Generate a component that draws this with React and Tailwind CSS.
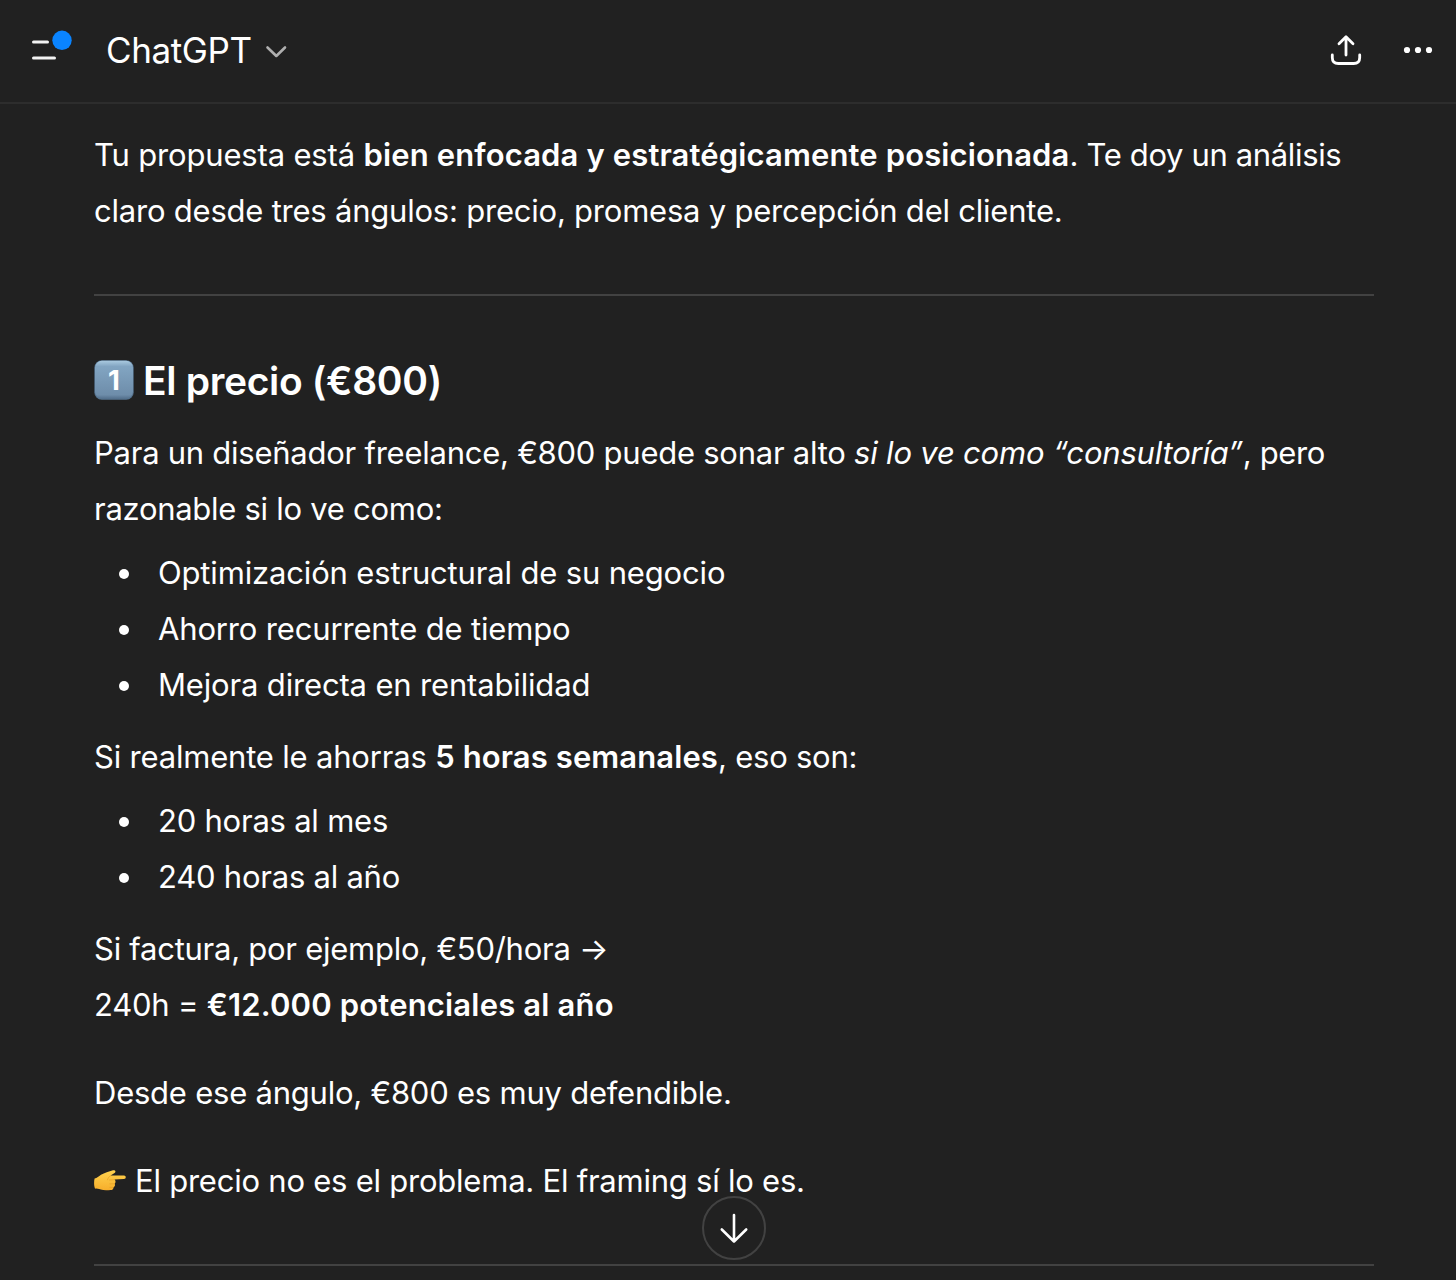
import React from "react";

function Bullet({ children }) {
  return (
    <li className="flex h-14 items-center">
      <span className="ml-[25px] mt-px h-2.5 w-2.5 shrink-0 rounded-full bg-white" />
      <span className="ml-[29px]">{children}</span>
    </li>
  );
}

function Header() {
  return (
    <header className="flex h-[104px] shrink-0 items-center border-b-2 border-[#2d2d2d]">
      <svg className="ml-7 h-12 w-12" viewBox="28 27 48 48" fill="none">
        <path d="M33.5 42H47.5M33.5 58H54.5" stroke="#f3f3f3" strokeWidth="3" strokeLinecap="round" />
        <circle cx="62" cy="40.3" r="9.7" fill="#0a84ff" />
      </svg>
      <h1 className="mb-0.5 ml-[30px] w-[159px] text-[35px] leading-[48px] tracking-[-0.4px]">ChatGPT</h1>
      <svg className="h-6 w-6" viewBox="265 39 24 24" fill="none">
        <path d="M267.5 47.5L276.3 56L285 47.5" stroke="#afafaf" strokeWidth="2.6" strokeLinecap="round" strokeLinejoin="round" />
      </svg>
      <svg className="ml-auto h-10 w-10" viewBox="1326 31 40 40" fill="none" stroke="#fff" strokeWidth="2.8" strokeLinecap="round" strokeLinejoin="round">
        <path d="M1346 55V37M1339 43.7L1346 36.8L1353 43.7M1332.3 55V57.5Q1332.3 63.5 1338.3 63.5H1353.7Q1359.7 63.5 1359.7 57.5V55" />
      </svg>
      <svg className="ml-8 mr-[18px] h-10 w-10" viewBox="1398 31 40 40" fill="#fff">
        <circle cx="1407" cy="50" r="3.1" />
        <circle cx="1418" cy="50" r="3.1" />
        <circle cx="1429" cy="50" r="3.1" />
      </svg>
    </header>
  );
}

function KeycapOne() {
  return (
    <svg className="mb-0.5 mr-[9px] h-10 w-10" viewBox="0 0 40 40">
      <defs>
        <linearGradient id="cap" x1="0" y1="0" x2="0" y2="1">
          <stop offset="0" stopColor="#a9c9df" />
          <stop offset="0.15" stopColor="#82a5c2" />
          <stop offset="0.9" stopColor="#6e8daa" />
          <stop offset="1" stopColor="#55718d" />
        </linearGradient>
      </defs>
      <rect x="0.3" y="0.3" width="39.4" height="39.4" rx="7.5" fill="#55738f" />
      <rect x="1" y="0.8" width="38" height="37.8" rx="7" fill="url(#cap)" />
      <text x="19.8" y="30" textAnchor="middle" fontFamily="Inter, sans-serif" fontWeight="700" fontSize="27.5" fill="#fff">1</text>
    </svg>
  );
}

function PointingHand() {
  return (
    <svg className="mr-[9px] h-8 w-8" viewBox="0 0 32 32">
      <defs>
        <linearGradient id="skin" x1="0" y1="0" x2="0" y2="1">
          <stop offset="0" stopColor="#ffd34f" />
          <stop offset="1" stopColor="#f7ae2b" />
        </linearGradient>
      </defs>
      <path d="M0.6 13.5C3 12.8 4.7 11.3 7 9.7C10.5 7.8 14.8 6.3 19 5.2C21.8 4.7 22.2 7.2 20.2 8.2L16.6 10.5H30C32.3 10.5 32.3 14 30 14L20.5 14.6C22 16 21.7 17.9 20.7 18.7C21.4 20.3 20.8 21.7 19.4 22.3C19.6 24 18.4 25 16.7 25C13 25.3 9.3 25.4 6.8 24.6C4.5 23.5 3 23.7 1 23.4C-0.2 20.8-0.1 16 0.6 13.5Z" fill="url(#skin)" />
      <path d="M20.5 14.7L15.5 15M20.6 18.8L15.8 18.9M19.2 22.4L15.8 22.4" fill="none" stroke="#e09a22" strokeWidth="0.6" strokeLinecap="round" />
      <path d="M16.6 10.7C14.8 11.7 13.8 13.2 13.5 14.8" fill="none" stroke="#e39b20" strokeWidth="0.6" strokeLinecap="round" />
    </svg>
  );
}

export default function App() {
  return (
    <div className="flex h-[1280px] w-[1456px] flex-col overflow-hidden bg-[#212121] font-['Inter','Liberation_Sans',sans-serif] text-white">
      <Header />
      <main className="ml-[94px] mt-[23px] w-[1280px] whitespace-nowrap text-[31px] leading-[56px] tracking-[-0.23px]">
        <p>
          <span className="tracking-[-0.17px]">Tu propuesta está </span>
          <strong className="font-semibold tracking-[0.13px]">bien enfocada y estratégicamente posicionada</strong>
          <span className="tracking-[-0.35px]">. Te doy un análisis</span>
          <br />
          <span className="tracking-[-0.22px]">claro desde tres ángulos: precio, promesa y percepción del cliente.</span>
        </p>
        <hr className="mt-[55px] border-t-2 border-[#424242]" />
        <h2 className="mt-[57px] flex h-14 items-center text-[39px] font-semibold tracking-[-0.33px]">
          <KeycapOne />
          <span>El precio (€800)</span>
        </h2>
        <p className="mt-4">
          <span className="tracking-[-0.25px]">Para un diseñador freelance, €800 puede sonar alto </span>
          <em className="tracking-[-0.2px]">si lo ve como “consultoría”</em>
          <span className="tracking-[-0.35px]">, pero</span>
          <br />
          <span className="tracking-[-0.28px]">razonable si lo ve como:</span>
        </p>
        <ul className="mt-2 tracking-[-0.16px]">
          <Bullet>Optimización estructural de su negocio</Bullet>
          <Bullet>Ahorro recurrente de tiempo</Bullet>
          <Bullet>Mejora directa en rentabilidad</Bullet>
        </ul>
        <p className="mt-4">
          <span className="tracking-[-0.19px]">Si realmente le ahorras </span>
          <strong className="font-semibold tracking-[0.1px]">5 horas semanales</strong>
          <span>, eso son:</span>
        </p>
        <ul className="mt-2">
          <Bullet>20 horas al mes</Bullet>
          <Bullet>240 horas al año</Bullet>
        </ul>
        <p className="mt-4">
          <span className="tracking-[-0.26px]">Si factura, por ejemplo, €50/hora →</span>
          <br />
          <span>240h = </span>
          <strong className="font-semibold tracking-[0.18px]">€12.000 potenciales al año</strong>
        </p>
        <p className="mt-8">Desde ese ángulo, €800 es muy defendible.</p>
        <div className="relative mt-8">
          <p className="flex items-center">
            <PointingHand />
            <span>El precio no es el problema. El framing sí lo es.</span>
          </p>
          <button className="absolute left-[608px] top-[43px] flex h-16 w-16 items-center justify-center rounded-full border-2 border-[#424242]">
            <svg className="h-10 w-10" viewBox="0 0 40 40" fill="none" stroke="#fff" strokeWidth="2.6" strokeLinecap="round" strokeLinejoin="round">
              <path d="M20 7V33.5M7.8 21.5L20 33.5L32.2 21.5" />
            </svg>
          </button>
        </div>
        <hr className="mt-[55px] border-t-2 border-[#424242]" />
      </main>
    </div>
  );
}
